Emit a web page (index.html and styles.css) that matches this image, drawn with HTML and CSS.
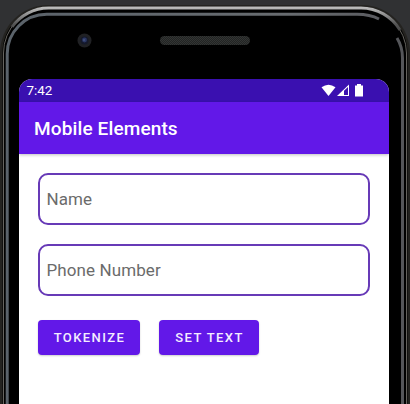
FILE: index.html
```html
<!DOCTYPE html>
<html lang="en">
<head>
<meta charset="utf-8">
<title>Mobile Elements</title>
<link rel="stylesheet" href="styles.css">
</head>
<body>
<div class="device">
  <svg class="shell" width="410" height="404" viewBox="0 0 410 404" fill="none" aria-hidden="true">
    <defs>
      <linearGradient id="rim" x1="0" y1="0" x2="0" y2="60" gradientUnits="userSpaceOnUse">
        <stop offset="0.1" stop-color="#c4c4c4"/>
        <stop offset="0.2" stop-color="#a0a0a0"/>
        <stop offset="0.4" stop-color="#555"/>
        <stop offset="0.7" stop-color="#333"/>
      </linearGradient>
      <linearGradient id="inner" x1="0" y1="0" x2="410" y2="0" gradientUnits="userSpaceOnUse">
        <stop offset="0" stop-color="#5a626a"/>
        <stop offset="0.7" stop-color="#686c70"/>
        <stop offset="1" stop-color="#56565b"/>
      </linearGradient>
      <pattern id="mesh" width="2" height="2" patternUnits="userSpaceOnUse">
        <rect width="2" height="2" fill="#222423"/>
        <path d="M0 0h1v1H0zM1 1h1v1H1z" fill="#333534"/>
      </pattern>
    </defs>
    <path d="M0 404V53A48 48 0 0 1 48 5H362A48 48 0 0 1 410 53V404Z" fill="#242320"/>
    <path d="M2.500 404V53A46 46 0 0 1 48.500 6.500H361A46.500 46.500 0 0 1 407.500 53V404Z" fill="#000"/>
    <path class="rim-line" d="M3.500 404V53A45 45 0 0 1 48.500 8H361A45.500 45.500 0 0 1 406.500 53V404"/>
    <path class="rim-glow" d="M12 27A45 45 0 0 1 48.500 8H361A45.500 45.500 0 0 1 400 30"/>
    <path class="inner-line" d="M7.200 404V54A39.500 39.500 0 0 1 46.700 14.300H357Q370 14.300 379 19"/>
    <path class="inner-side" d="M397 38Q402.500 47 402.500 58V404"/>
    <circle cx="84.500" cy="40.500" r="7" fill="#202124"/>
    <circle cx="84.500" cy="40.500" r="4" fill="#15192b"/>
    <circle cx="84.500" cy="40" r="2.400" fill="#2b3866"/>
    <circle cx="84" cy="40" r="0.800" fill="#5c6990"/>
    <rect x="160" y="36" width="90" height="9" rx="4.500" fill="url(#mesh)"/>
  </svg>
  <main class="screen">
    <div class="status-bar">
      <span class="clock">7:42</span>
      <svg class="status-icons" width="43" height="14" viewBox="0 0 43 14" aria-hidden="true">
        <path d="M-.5 3.200Q6.500 -1.800 13.500 3.200L6.500 12Z" fill="#fff"/>
        <path d="M15 12L27 .5V12Z" fill="#fff"/>
        <path d="M22 6.800L26 3V11H22Z" fill="#3b10b0"/>
        <path d="M33 1.500h2V0h4v1.500h2V12.500h-8Z" fill="#fff"/>
      </svg>
    </div>
    <header class="app-bar">Mobile Elements</header>
    <form class="form">
      <input class="field" type="text" placeholder="Name" aria-label="Name">
      <input class="field" type="text" placeholder="Phone Number" aria-label="Phone Number">
      <div class="actions">
        <button class="button tokenize" type="button">TOKENIZE</button>
        <button class="button set-text" type="button">SET TEXT</button>
      </div>
    </form>
  </main>
</div>
</body>
</html>
```
FILE: styles.css
```css
* { box-sizing: border-box; }
body {
  margin: 0;
  background: #303133;
  font-family: Roboto, sans-serif;
  overflow: hidden;
}
.device {
  position: relative;
  height: 404px;
  padding: 79px 21px 0 19px;
}
.shell { position: absolute; inset: 0; }
.rim-line { stroke: #66645f; stroke-width: 1; }
.rim-glow { stroke: url(#rim); stroke-width: 3; }
.inner-line { stroke: url(#inner); stroke-width: 3; }
.inner-side { stroke: #55565a; stroke-width: 3; }
.screen {
  position: relative;
  height: 325px;
  background: #fff;
  border-radius: 13px 13px 0 0;
  overflow: hidden;
}
.status-bar {
  display: flex;
  align-items: center;
  justify-content: space-between;
  height: 23px;
  padding: 0 24px 0 7.500px;
  background: #3a10b0;
  color: #fff;
}
.clock { font-size: 13.4px; line-height: 23px; }
.status-icons { display: block; overflow: visible; }
.app-bar {
  height: 52px;
  padding-left: 15px;
  background: #6218e8;
  color: #fff;
  font-size: 19px;
  font-weight: 500;
  letter-spacing: .13px;
  line-height: 54px;
  box-shadow: 0 1px 3px rgba(0, 0, 0, .25);
}
.form { padding: 19px 19px 0; }
.field {
  display: block;
  width: 332px;
  height: 52px;
  margin-bottom: 19px;
  padding: 0 6.500px;
  border: 2px solid #673ab7;
  border-radius: 10px;
  background: #fff;
  font: 17px Roboto, sans-serif;
  letter-spacing: .1px;
  outline: 0;
}
.field::placeholder { color: #6b6b6b; opacity: 1; }
.actions { display: flex; gap: 19px; padding-top: 5px; }
.button {
  height: 35px;
  padding: 0 0 0 1px;
  border: 0;
  border-radius: 4px;
  background: #6218e8;
  color: #f4edff;
  font: 500 13px Roboto, sans-serif;
  letter-spacing: 1.4px;
  box-shadow: 0 1px 2px rgba(0, 0, 0, .2);
}
.tokenize { width: 102px; }
.set-text { width: 100px; }
```
